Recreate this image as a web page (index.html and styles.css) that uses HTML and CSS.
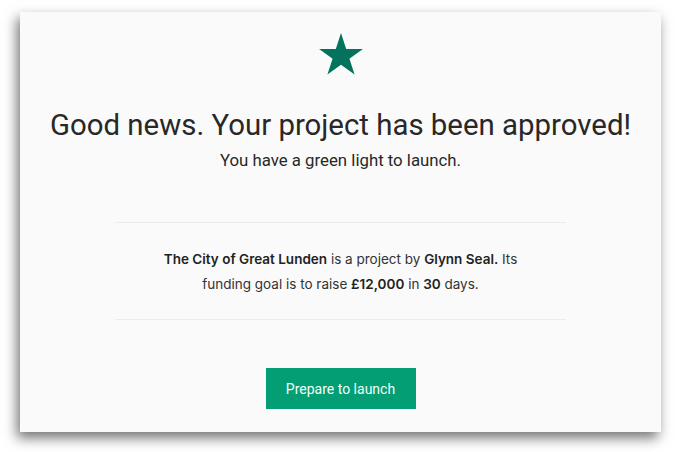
FILE: index.html
```html
<!DOCTYPE html>
<html lang="en">
<head>
<meta charset="utf-8">
<title>Project approved</title>
<link rel="stylesheet" href="styles.css">
</head>
<body>
<main class="card">
  <div class="star">
    <svg width="44" height="42" viewBox="0 0 44 42" aria-hidden="true">
      <polygon fill="#04735e" points="22,0 27.2,15.9 43.9,15.9 30.4,25.7 35.6,41.6 22,31.8 8.4,41.6 13.6,25.7 0.1,15.9 16.8,15.9"/>
    </svg>
  </div>
  <h1 class="title">Good news. Your project has been approved!</h1>
  <p class="subtitle">You have a green light to launch.</p>
  <section class="summary">
    <p class="summary-text"><strong>The City of Great Lunden</strong> is a project by <strong>Glynn Seal.</strong> Its funding goal is to raise <strong>£12,000</strong> in <strong>30</strong> days.</p>
  </section>
  <div class="actions">
    <button class="btn" type="button">Prepare to launch</button>
  </div>
</main>
</body>
</html>
```
FILE: styles.css
```css
html, body {
  margin: 0;
  padding: 0;
  background: #ffffff;
}
body {
  padding: 12px 16px 20px 20px;
  font-family: Inter, "Liberation Sans", sans-serif;
  color: #282828;
}
.card {
  width: 641px;
  height: 420px;
  box-sizing: border-box;
  background: #fafafa;
  box-shadow: -3px 6px 12px rgba(0, 0, 0, 0.55);
  display: flex;
  flex-direction: column;
  align-items: center;
  padding-top: 21px;
}
.star {
  display: flex;
  height: 42px;
}
.title {
  margin: 32px 0 0;
  font-family: Roboto, "Liberation Sans", sans-serif;
  font-weight: 400;
  font-size: 29.4px;
  line-height: 36px;
  color: #282828;
}
.subtitle {
  margin: 6px 0 0;
  font-family: Roboto, "Liberation Sans", sans-serif;
  font-size: 16.8px;
  line-height: 22px;
  color: #282828;
}
.summary {
  margin-top: 51px;
  width: 451px;
  border-top: 1px solid #ececec;
  border-bottom: 1px solid #ececec;
  display: flex;
  justify-content: center;
  padding: 24px 0 22px;
}
.summary-text {
  margin: 0;
  width: 372px;
  text-align: center;
  font-size: 13.5px;
  line-height: 25px;
  color: #333;
}
.summary-text strong {
  font-weight: 600;
  color: #222;
}
.actions {
  margin-top: 48px;
}
.btn {
  width: 150px;
  height: 41px;
  border: 0;
  background: #039e74;
  color: #f2fff9;
  font-family: Roboto, "Liberation Sans", sans-serif;
  font-size: 14px;
  padding: 0;
  cursor: pointer;
}
```
